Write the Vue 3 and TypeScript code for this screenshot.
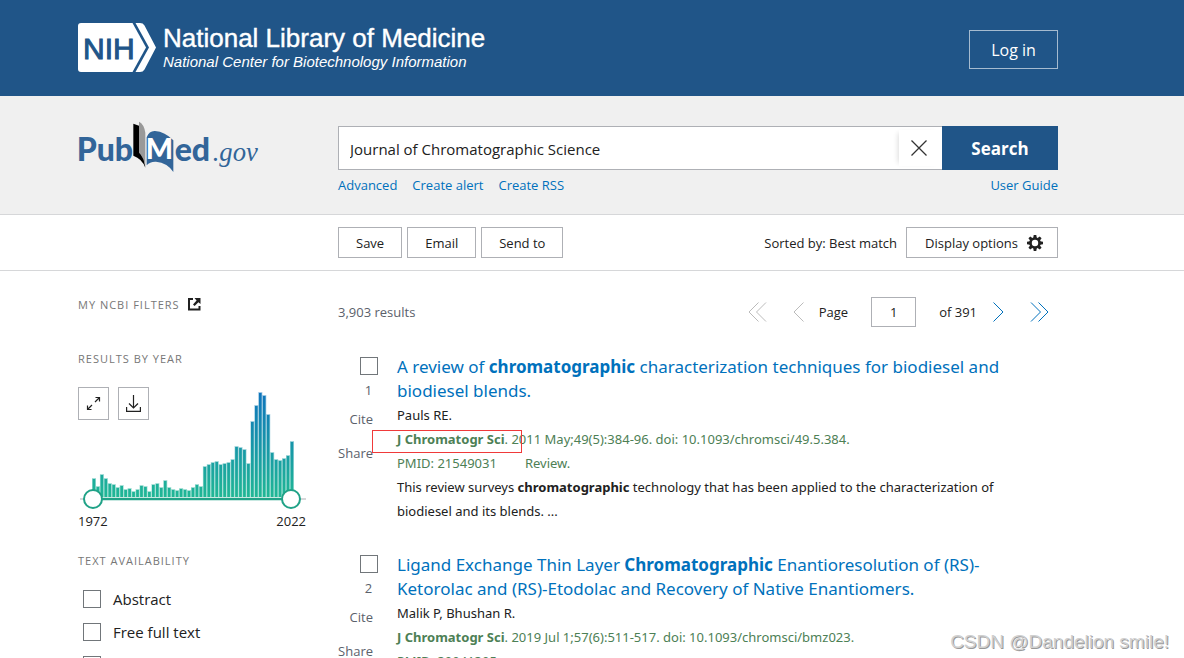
<script setup lang="ts">
import { ref } from 'vue'

interface Chunk {
  text: string
  bold?: boolean
}
interface Article {
  id: number
  title: Chunk[]
  authors: string
  journal: string
  citation: string
  pmid: string
  kind?: string
  snippet: Chunk[]
  marked?: boolean
}

const query = ref('Journal of Chromatographic Science')
const page = ref('1')
const fromYear = ref(1972)
const toYear = ref(2022)

const counts: number[] = [
  18, 10, 22, 18, 13, 12, 9, 11, 7, 8, 5, 7, 11, 10, 5, 12, 13, 9, 16, 9, 7, 6, 8, 7, 6, 9, 12, 10,
  30, 32, 34, 35, 32, 33, 34, 37, 50, 49, 47, 33, 75, 91, 104, 101, 82, 44, 37, 36, 38, 41, 55,
]
const bars = counts.map((h, i) => ({ x: 14 + i * 3.96, y: 110 - h, h }))

const filters = ['Abstract', 'Free full text', 'Full text']

const articles: Article[] = [
  {
    id: 1,
    title: [
      { text: 'A review of ' },
      { text: 'chromatographic', bold: true },
      { text: ' characterization techniques for biodiesel and biodiesel blends.' },
    ],
    authors: 'Pauls RE.',
    journal: 'J Chromatogr Sci',
    citation: '. 2011 May;49(5):384-96. doi: 10.1093/chromsci/49.5.384.',
    pmid: 'PMID: 21549031',
    kind: 'Review.',
    snippet: [
      { text: 'This review surveys ' },
      { text: 'chromatographic', bold: true },
      { text: ' technology that has been applied to the characterization of biodiesel and its blends. ...' },
    ],
    marked: true,
  },
  {
    id: 2,
    title: [
      { text: 'Ligand Exchange Thin Layer ' },
      { text: 'Chromatographic', bold: true },
      { text: ' Enantioresolution of (RS)-Ketorolac and (RS)-Etodolac and Recovery of Native Enantiomers.' },
    ],
    authors: 'Malik P, Bhushan R.',
    journal: 'J Chromatogr Sci',
    citation: '. 2019 Jul 1;57(6):511-517. doi: 10.1093/chromsci/bmz023.',
    pmid: 'PMID: 30941395',
    snippet: [],
  },
]
</script>

<template>
  <div class="page">
    <header class="top wrap">
      <a href="#" class="nih" aria-label="National Library of Medicine">
        <svg width="78" height="50" viewBox="0 0 78 50" aria-hidden="true">
          <path d="M3 0H54.5L68 24.5L54.5 49H3Q0 49 0 46V3Q0 0 3 0Z" fill="#fff" />
          <path d="M57.5 0H62Q65 0 66.5 2.4L78 24.5L66.5 46.5Q65 49 62 49H57.5L71 24.5Z" fill="#fff" />
          <text x="5" y="36" class="nih-mark">NIH</text>
        </svg>
        <span class="nih-text">
          <span class="nih-name">National Library of Medicine</span>
          <span class="nih-sub">National Center for Biotechnology Information</span>
        </span>
      </a>
      <button type="button" class="login">Log in</button>
    </header>

    <section class="search-band">
      <div class="wrap columns">
        <a href="#" class="pubmed" aria-label="PubMed.gov">
          <svg width="182" height="54" viewBox="24 33 546 162" aria-hidden="true">
            <text x="20" y="154" class="pm-word">Pub</text>
            <path d="M190 41L207 47V122L222 148L226 173Q216 146 190 137Z" fill="#000" />
            <path d="M207 35Q222 42 226 68V172Q222 142 207 128Z" fill="#999" />
            <path d="M230 82Q238 62 255 63Q285 65 310 91V186Q292 158 258 155Q240 154 230 166Z" fill="#326599" />
            <text x="227" y="147" class="pm-m">M</text>
            <text x="314" y="154" class="pm-word">ed</text>
            <text x="428" y="154" class="pm-gov">.gov</text>
          </svg>
        </a>
        <div>
          <form class="search" @submit.prevent>
            <div class="search-box">
              <input v-model="query" type="text" aria-label="Search PubMed" class="search-input" />
              <button type="button" class="clear" aria-label="Clear search" @click="query = ''">
                <svg width="16" height="16" viewBox="0 0 16 16"><path d="M0.5 0.5L15.5 15.5M15.5 0.5L0.5 15.5" stroke="#333" stroke-width="1.3" /></svg>
              </button>
            </div>
            <button type="submit" class="search-btn">Search</button>
          </form>
          <nav class="links">
            <a href="#">Advanced</a>
            <a href="#">Create alert</a>
            <a href="#">Create RSS</a>
            <a href="#" class="guide">User Guide</a>
          </nav>
        </div>
      </div>
    </section>

    <section class="toolbar">
      <div class="wrap columns">
        <div class="tools">
          <button type="button" class="tool">Save</button>
          <button type="button" class="tool">Email</button>
          <button type="button" class="tool">Send to</button>
          <span class="sorted">Sorted by: Best match</span>
          <button type="button" class="tool display">
            Display options
            <svg width="16" height="16" viewBox="-8 -8 16 16" aria-hidden="true">
              <circle r="4.5" fill="none" stroke="#212121" stroke-width="2.6" />
              <path
                v-for="n in 8"
                :key="n"
                d="M-1.8 -5L-1.3 -8H1.3L1.8 -5Z"
                fill="#212121"
                :transform="`rotate(${n * 45})`"
              />
            </svg>
          </button>
        </div>
      </div>
    </section>

    <main class="wrap columns body">
      <aside>
        <h3 class="side-title">
          MY NCBI FILTERS
          <svg width="13" height="13" viewBox="0 0 13 13" aria-hidden="true">
            <path d="M5 1H1V11.5H11.5V8" fill="none" stroke="#212121" stroke-width="2" />
            <path d="M6.5 0H12.5V6L10.4 4.2L6.6 8L5 6.4L8.6 2.4Z" fill="#212121" />
          </svg>
        </h3>
        <h3 class="side-title year">RESULTS BY YEAR</h3>
        <div class="timeline">
          <svg class="chart" viewBox="0 0 228 123" width="228" height="123" aria-hidden="true">
            <defs>
              <linearGradient id="bar-fill" gradientUnits="userSpaceOnUse" x1="0" y1="6" x2="0" y2="110">
                <stop offset="0" stop-color="#0f75bc" />
                <stop offset="1" stop-color="#20b795" />
              </linearGradient>
            </defs>
            <g fill="url(#bar-fill)">
              <rect v-for="(b, i) in bars" :key="i" :x="b.x" :y="b.y - 1" width="4" :height="b.h + 1" opacity="0.4" />
              <rect v-for="(b, i) in bars" :key="`c${i}`" :x="b.x + 0.6" :y="b.y" width="2.7" :height="b.h" />
            </g>
            <path d="M2 112H228" stroke="#d6d7d9" stroke-width="2" />
            <path d="M15 112H213" stroke="#20a287" stroke-width="2.4" />
          </svg>
          <div class="chart-buttons">
            <button type="button" class="square" aria-label="Expand chart">
              <svg width="15" height="15" viewBox="0 0 15 15" fill="none" stroke="#212121" stroke-width="1.2">
                <path d="M9.5 1.5H13.5V5.5M13.5 1.5L9 6M5.5 13.5H1.5V9.5M1.5 13.5L6 9" />
              </svg>
            </button>
            <button type="button" class="square" aria-label="Download chart">
              <svg width="15" height="17" viewBox="0 0 15 17" fill="none" stroke="#212121" stroke-width="1.2">
                <path d="M7.5 0V13M3 8.5L7.5 13L12 8.5M0.6 12V16.4H14.4V12" />
              </svg>
            </button>
          </div>
          <input v-model="fromYear" class="range" type="range" min="1972" max="2022" aria-label="From year" />
          <input v-model="toYear" class="range" type="range" min="1972" max="2022" aria-label="To year" />
        </div>
        <div class="years"><span>{{ fromYear }}</span><span>{{ toYear }}</span></div>
        <h3 class="side-title avail">TEXT AVAILABILITY</h3>
        <label v-for="f in filters" :key="f" class="filter"><input type="checkbox" class="box" />{{ f }}</label>
      </aside>

      <div>
        <div class="pager">
          <span class="count">3,903 results</span>
          <button type="button" class="arrow off first" aria-label="First page" disabled>
            <svg width="19" height="20" viewBox="0 0 19 20"><path d="M10.5 0.5L1 10L10.5 19.5M18 0.5L8.5 10L18 19.5" /></svg>
          </button>
          <button type="button" class="arrow off prev" aria-label="Previous page" disabled>
            <svg width="11" height="20" viewBox="0 0 11 20"><path d="M10.5 0.5L1 10L10.5 19.5" /></svg>
          </button>
          <label for="page-number" class="page-label">Page</label>
          <input id="page-number" v-model="page" type="text" class="page-input" />
          <span class="of">of 391</span>
          <button type="button" class="arrow next" aria-label="Next page">
            <svg width="11" height="20" viewBox="0 0 11 20"><path d="M0.5 0.5L10 10L0.5 19.5" /></svg>
          </button>
          <button type="button" class="arrow last" aria-label="Last page">
            <svg width="19" height="20" viewBox="0 0 19 20"><path d="M1 0.5L10.5 10L1 19.5M8.5 0.5L18 10L8.5 19.5" /></svg>
          </button>
        </div>

        <article v-for="a in articles" :key="a.id" class="article">
          <div class="actions">
            <input :id="`pick-${a.id}`" type="checkbox" class="box" />
            <label :for="`pick-${a.id}`" class="num">{{ a.id }}</label>
            <button type="button" class="act">Cite</button>
            <button type="button" class="act share">Share</button>
          </div>
          <div class="content">
            <a href="#" class="title"><template v-for="(c, i) in a.title" :key="i"><b v-if="c.bold">{{ c.text }}</b><template v-else>{{ c.text }}</template></template></a>
            <div>{{ a.authors }}</div>
            <div class="cite">
              <span v-if="a.marked" class="marker"></span>
              <b>{{ a.journal }}</b>{{ a.citation }}
            </div>
            <div class="cite"><span>{{ a.pmid }}</span><span v-if="a.kind" class="kind">{{ a.kind }}</span></div>
            <div><template v-for="(c, i) in a.snippet" :key="i"><b v-if="c.bold">{{ c.text }}</b><template v-else>{{ c.text }}</template></template></div>
          </div>
        </article>
      </div>
    </main>
    <div class="watermark">CSDN @Dandelion smile!</div>
  </div>
</template>

<style>
body {
  margin: 0;
}
</style>

<style scoped>
.page {
  position: relative;
  height: 100vh;
  overflow: hidden;
  background: #fff;
  color: #212121;
  font-family: 'Open Sans', 'Noto Sans', sans-serif;
  font-size: 13px;
  line-height: 24px;
}
.page * {
  box-sizing: border-box;
}
button,
input {
  font: inherit;
  color: inherit;
  margin: 0;
}
button {
  padding: 0;
  cursor: pointer;
}
a {
  color: #0071bc;
  text-decoration: none;
}
.wrap {
  padding: 0 126px 0 78px;
}
.columns {
  display: grid;
  grid-template-columns: 228px 1fr;
  column-gap: 32px;
}
.top {
  height: 96px;
  background: #205588;
  display: flex;
  align-items: center;
  justify-content: space-between;
}
.nih {
  display: flex;
  gap: 7px;
  color: #fff;
  font-family: 'Liberation Sans', Arial, sans-serif;
}
.nih-mark {
  font: 30px 'Liberation Sans', Arial, sans-serif;
  fill: #205588;
  stroke: #205588;
  stroke-width: 1;
}
.nih-text {
  display: flex;
  flex-direction: column;
  white-space: nowrap;
}
.nih-name {
  font-size: 26px;
  line-height: 30px;
  -webkit-text-stroke: 0.4px #fff;
}
.nih-sub {
  font-size: 15px;
  line-height: 18px;
  font-style: italic;
}
.login {
  width: 89px;
  height: 39px;
  margin-top: 3px;
  background: none;
  border: 1px solid #a6bbcf;
  color: #fff;
  font-size: 16px;
}
.search-band {
  background: #f0f0f0;
  border-bottom: 1px solid #d6d7d9;
  height: 119px;
}
.pubmed {
  margin-top: 25px;
}
.pubmed svg {
  overflow: visible;
}
.pm-word {
  font: 900 96px Lato, sans-serif;
  fill: #326599;
}
.pm-m {
  font: 900 86px Lato, sans-serif;
  fill: #fff;
}
.pm-gov {
  font: italic 80px 'Liberation Serif', serif;
  fill: #326599;
}
.search {
  display: flex;
  margin-top: 30px;
  height: 44px;
}
.search-box {
  flex: 1;
  display: flex;
  border: 1px solid #aeb0b5;
  border-right: 0;
  background: #fff;
}
.search-input {
  flex: 1;
  min-width: 0;
  border: 0;
  outline: 0;
  padding: 2px 11px 0;
  font-size: 15px;
  background: none;
}
.clear {
  width: 43px;
  margin: 3px 0;
  padding-right: 4px;
  border: 0;
  background: #fff;
  box-shadow: -4px 0 5px -3px #ddd;
  display: grid;
  place-items: center;
}
.search-btn {
  width: 116px;
  padding-top: 2px;
  border: 0;
  background: #205588;
  color: #fff;
  font-size: 17px;
  font-weight: 700;
}
.links {
  display: flex;
  gap: 15px;
  margin-top: 3px;
}
.guide {
  margin-left: auto;
}
.toolbar {
  border-bottom: 1px solid #d6d7d9;
  padding: 12px 0;
}
.tools {
  grid-column: 2;
  display: flex;
  align-items: center;
  gap: 5px;
}
.tool {
  height: 31px;
  padding: 0 17px;
  border: 1px solid #aeb0b5;
  background: #fff;
}
.sorted {
  margin-left: auto;
  margin-right: 4px;
}
.display {
  display: flex;
  align-items: center;
  gap: 9px;
  padding: 0 14px 0 18px;
}
.side-title {
  margin: 0;
  padding-top: 26px;
  font-size: 11px;
  line-height: 16px;
  font-weight: 400;
  letter-spacing: 1px;
  color: #777;
}
.side-title svg {
  margin-left: 4px;
  vertical-align: -2px;
}
.side-title.year {
  padding-top: 38px;
}
.side-title.avail {
  padding-top: 21px;
  margin-bottom: 13px;
}
.timeline {
  position: relative;
  display: grid;
  margin-top: 20px;
}
.chart,
.chart-buttons {
  grid-area: 1 / 1;
}
.chart-buttons {
  display: flex;
  gap: 9px;
  align-items: flex-start;
}
.square {
  width: 31px;
  height: 33px;
  border: 1px solid #aeb0b5;
  background: #fff;
  display: grid;
  place-items: center;
}
.range {
  position: absolute;
  left: 5px;
  right: 5px;
  bottom: 1px;
  width: 218px;
  height: 20px;
  appearance: none;
  background: none;
  pointer-events: none;
}
.range::-webkit-slider-thumb {
  appearance: none;
  width: 20px;
  height: 20px;
  box-sizing: border-box;
  border: 2px solid #20a287;
  border-radius: 50%;
  background: #fff;
  pointer-events: auto;
}
.years {
  display: flex;
  justify-content: space-between;
  line-height: 22px;
}
.filter {
  display: flex;
  align-items: center;
  gap: 12px;
  height: 33px;
  padding-left: 5px;
  font-size: 15px;
}
.box {
  appearance: none;
  flex: none;
  width: 18px;
  height: 18px;
  border: 1px solid #71767a;
  background: #fff;
}
.pager {
  display: flex;
  align-items: center;
  height: 30px;
  margin-top: 26px;
  margin-bottom: 28px;
  padding-right: 9px;
}
.count {
  flex: 1;
  color: #5b616b;
}
.arrow {
  border: 0;
  background: none;
  display: flex;
}
.arrow path {
  fill: none;
  stroke: #0071bc;
  stroke-width: 1;
}
.arrow.off path {
  stroke: #bbb;
}
.prev {
  margin-left: 26px;
}
.page-label {
  margin-left: 15px;
}
.page-input {
  width: 45px;
  height: 30px;
  margin: 0 23px;
  padding: 0;
  border: 1px solid #aeb0b5;
  text-align: center;
}
.next {
  margin-left: 16px;
}
.last {
  margin-left: 26px;
}
.article {
  display: grid;
  grid-template-columns: 40px 1fr;
  column-gap: 19px;
  margin-bottom: 30px;
}
.actions {
  display: flex;
  flex-direction: column;
  align-items: flex-end;
  padding-top: 2px;
  line-height: 20px;
  color: #5b616b;
}
.num {
  width: 19px;
  margin-top: 5px;
  text-align: center;
}
.act {
  border: 0;
  background: none;
  margin: 9px 5px 0 0;
  line-height: 20px;
}
.share {
  margin-top: 14px;
}
.content {
  padding-right: 50px;
  font-family: 'Noto Sans', 'Open Sans', sans-serif;
}
.title {
  display: block;
  font-size: 17px;
}
.cite {
  position: relative;
  color: #4d8055;
}
.kind {
  margin-left: 28px;
}
.marker {
  position: absolute;
  left: -25px;
  top: 3px;
  width: 150px;
  height: 23px;
  border: 1px solid #f03a3a;
}
.watermark {
  position: absolute;
  right: 15px;
  bottom: 4px;
  font-family: 'Liberation Sans', Arial, sans-serif;
  font-size: 19px;
  color: #d0d0d0;
  text-shadow: 1px 1px 0 #999;
}
</style>
